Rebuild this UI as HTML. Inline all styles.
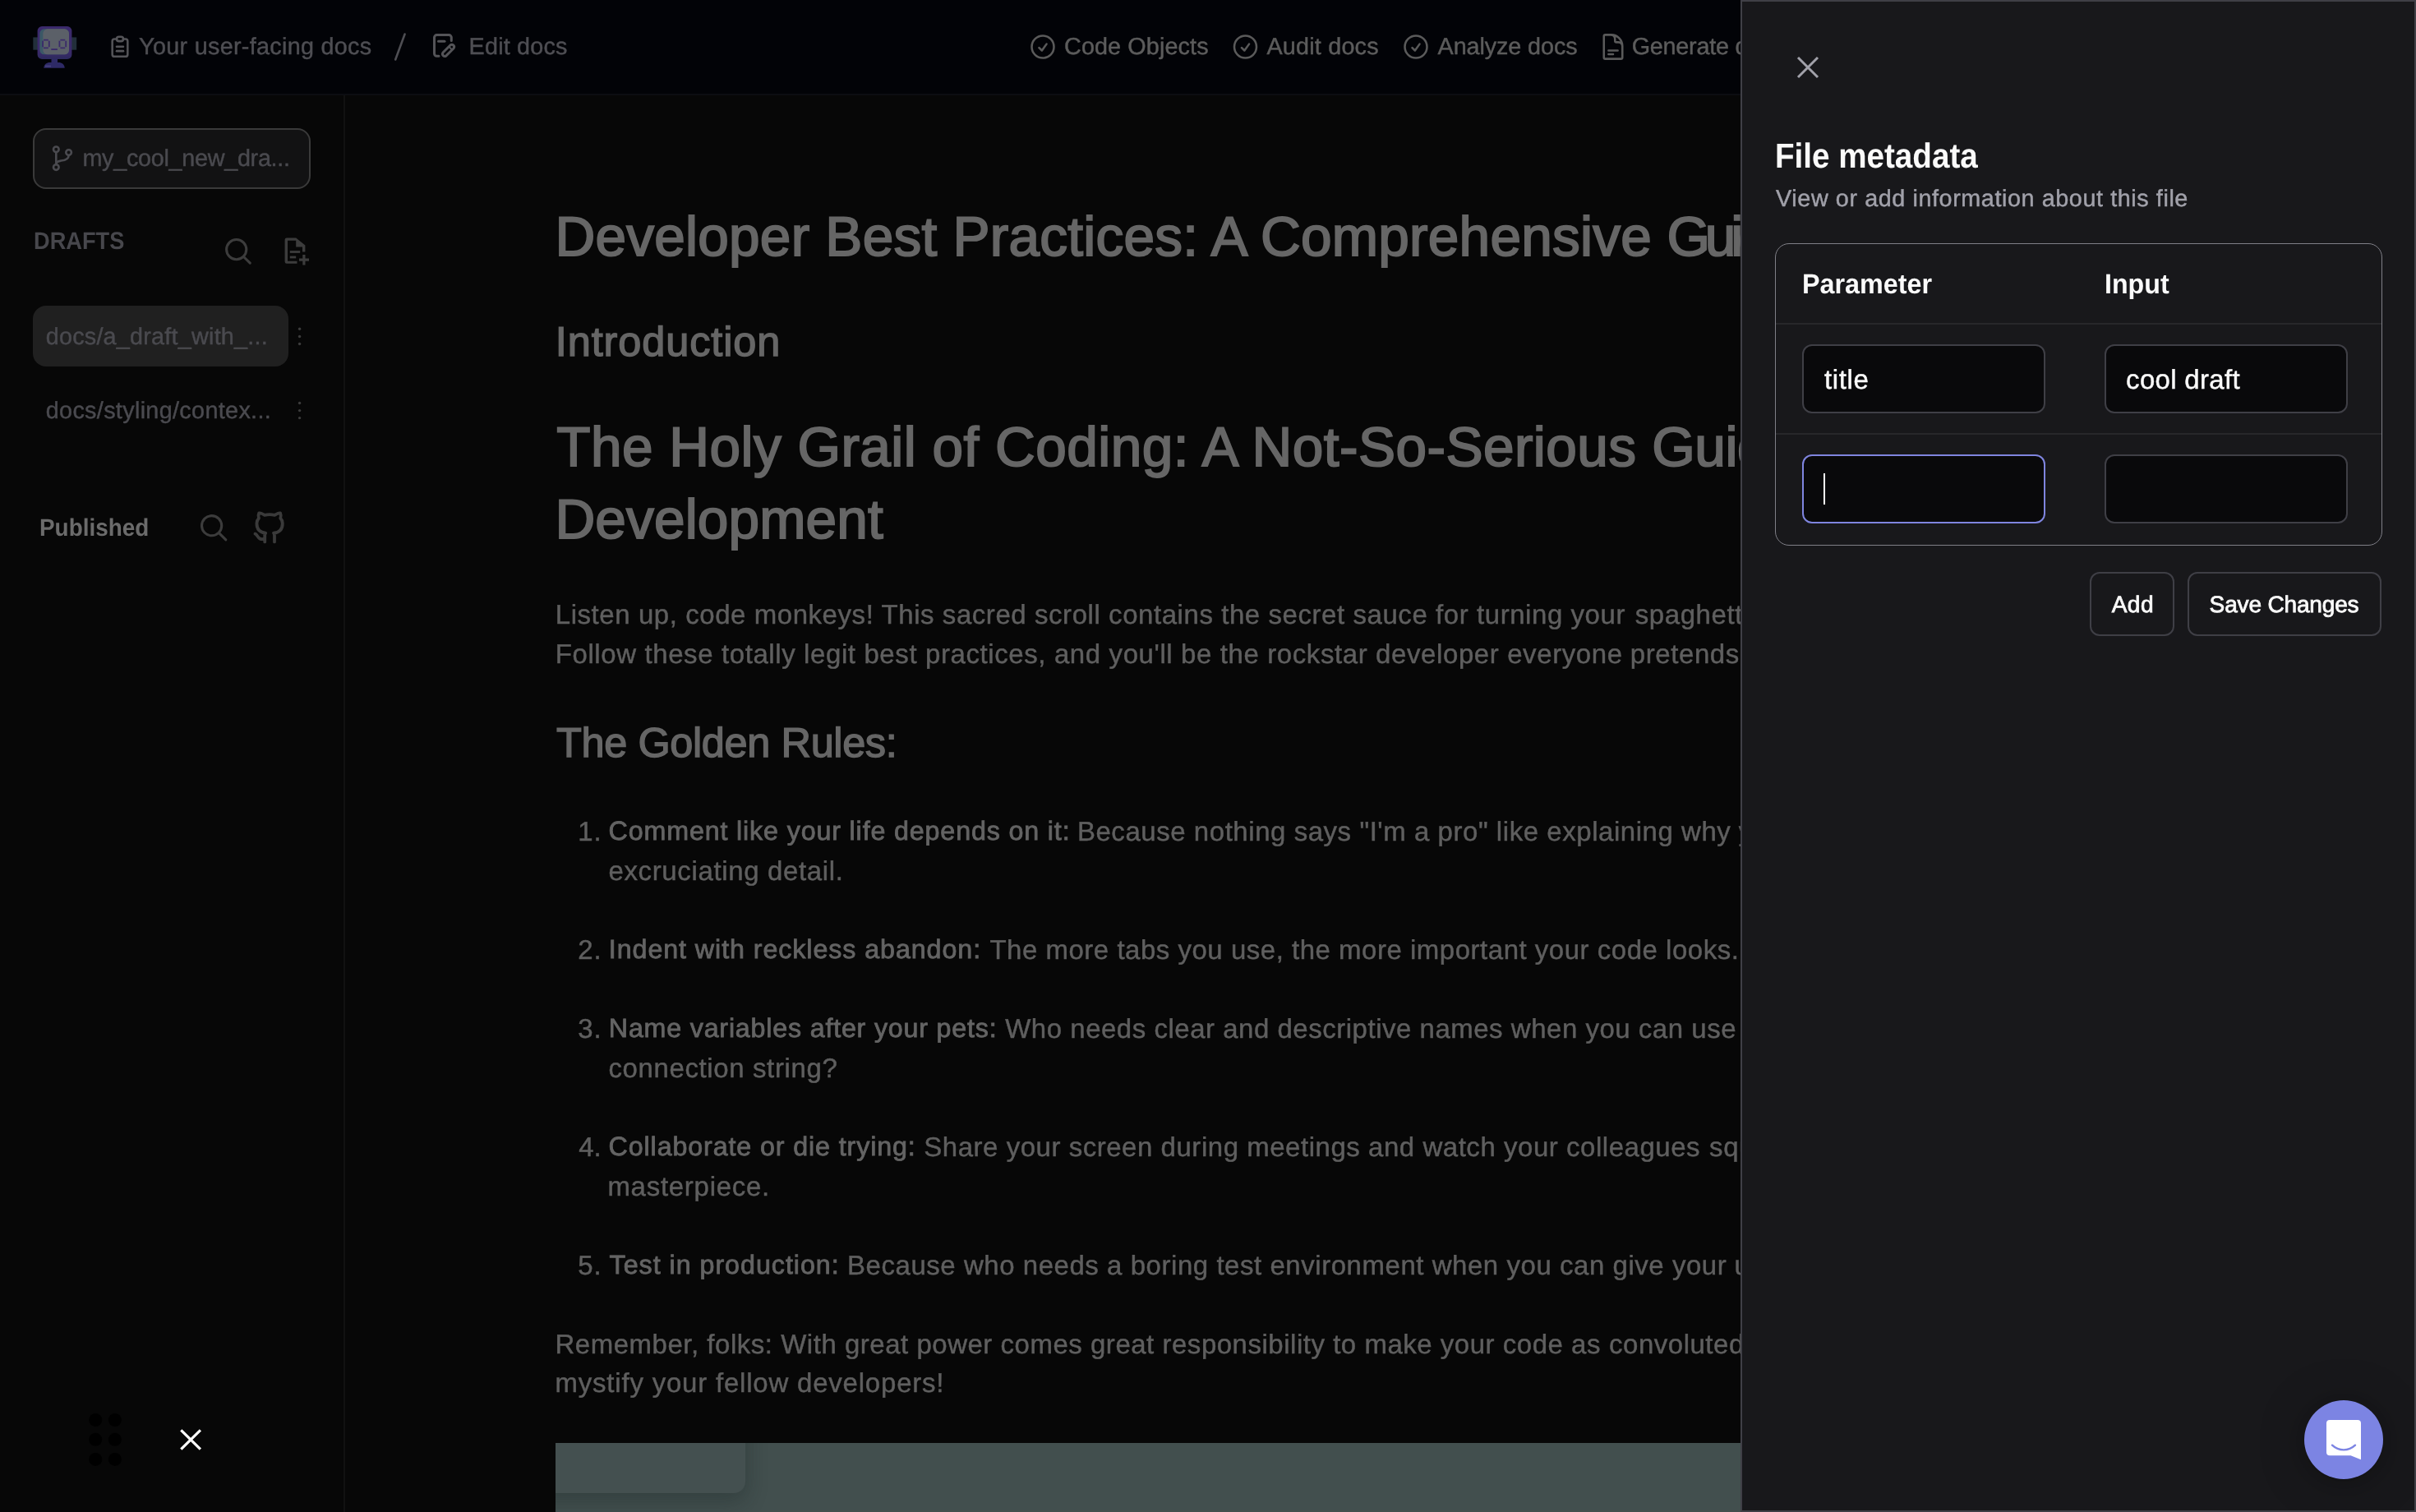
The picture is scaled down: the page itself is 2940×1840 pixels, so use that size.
<!DOCTYPE html>
<html lang="en">
<head>
<meta charset="utf-8">
<title>Edit docs</title>
<style>
html,body{margin:0;padding:0}
body{width:2940px;height:1840px;overflow:hidden;background:#070707;position:relative;font-family:"Liberation Sans",sans-serif}
.a{position:absolute;box-sizing:border-box}
.tl{will-change:transform;text-rendering:geometricPrecision}
.t{position:absolute;white-space:pre;font-family:"Liberation Sans",sans-serif}
#app{left:0;top:0;width:2118px;height:1840px;overflow:hidden}
#hdr{left:0;top:0;width:2940px;height:116px;background:#020307;border-bottom:2px solid #0c0d12}
#sbline{left:418px;top:116px;width:2px;height:1724px;background:#111111}
#branch{left:40px;top:156px;width:338px;height:74px;border:2px solid #3a3a3a;border-radius:16px;background:#121213}
#sel{left:40px;top:372px;width:311px;height:74px;border-radius:16px;background:#202020}
#img{left:676px;top:1756px;width:1500px;height:90px;background:#424f4e;overflow:hidden}
#imgcard{left:-50px;top:-50px;width:281px;height:111px;border-radius:14px;background:#445050;box-shadow:1px 10px 26px rgba(20,32,32,.32)}
#panel{left:2118px;top:0;width:822px;height:1840px;background:#18181b;border:2px solid #3f3f46}
#tbl{left:2160px;top:296px;width:739px;height:368px;border:1px solid #7f7f87;border-radius:17px}
.sep{left:2161px;width:737px;height:2px;background:#27272a}
.inp{width:296px;height:84px;border:2px solid #3f3f46;border-radius:12px;background:#09090b}
.btn{height:78px;border:2px solid #3f3f46;border-radius:12px;top:696px}
</style>
</head>
<body>
<div id="app" class="a">
  <div id="hdr" class="a"></div>
  <div id="sbline" class="a"></div>
  <div id="branch" class="a"></div>
  <div id="sel" class="a"></div>
  <div id="img" class="a"><div id="imgcard" class="a"></div></div>
<svg class="a" style="left:0;top:0" width="2118" height="1840" viewBox="0 0 2118 1840" fill="none">
<!-- logo -->
<g>
  <rect x="40.3" y="45.4" width="6" height="15.3" fill="#222f3a"/>
  <rect x="87" y="45.4" width="6.2" height="15.3" fill="#222f3a"/>
  <defs><linearGradient id="lg" x1="0" y1="0" x2="0" y2="1"><stop offset="0" stop-color="#3b2a6c"/><stop offset=".8" stop-color="#3a2a6a"/><stop offset="1" stop-color="#2c2a5c"/></linearGradient></defs>
  <rect x="45.6" y="32.1" width="41.8" height="39.8" rx="5.5" fill="url(#lg)"/>
  <rect x="48.3" y="35.3" width="35.7" height="31" rx="5.5" fill="#3b5866"/>
  <rect x="52.3" y="35.3" width="31.7" height="31" rx="5.5" fill="#5b6068"/>
  <g fill="#3a2a6a">
    <rect x="53" y="47.8" width="5.8" height="1.7"/><rect x="53" y="57.5" width="5.8" height="1.7"/>
    <rect x="51.2" y="49.7" width="1.8" height="7.5"/><rect x="58.9" y="49.7" width="1.8" height="7.5"/>
    <rect x="73.4" y="47.8" width="5.8" height="1.7"/><rect x="73.4" y="57.5" width="5.8" height="1.7"/>
    <rect x="71.5" y="49.7" width="1.8" height="7.5"/><rect x="79.3" y="49.7" width="1.8" height="7.5"/>
    <rect x="62.3" y="59.2" width="7.6" height="1.8"/>
  </g>
  <rect x="62.5" y="71.5" width="7.5" height="5" fill="#2e2a66"/>
  <path d="M53.3 82.7c0-4 3.5-6.6 7.5-6.6h10.4c4 0 7.5 2.600 7.500 6.600z" fill="#2e2a66"/>
  <rect x="55" y="79.6" width="7" height="1.8" fill="#46427f"/>
</g>
<!-- clipboard-text (tabler) -->
<g transform="translate(130 40.8) scale(1.3333)" stroke="#545458" stroke-width="1.9" stroke-linecap="round" stroke-linejoin="round">
  <path d="M9 5h-2a2 2 0 0 0 -2 2v12a2 2 0 0 0 2 2h10a2 2 0 0 0 2 -2v-12a2 2 0 0 0 -2 -2h-2"/>
  <path d="M9 5a2 2 0 0 1 2 -2h2a2 2 0 0 1 2 2a2 2 0 0 1 -2 2h-2a2 2 0 0 1 -2 -2z"/>
  <path d="M9 12h6"/><path d="M9 16h6"/>
</g>
<!-- slash -->
<path d="M492.600 41.500L481.200 72.500" stroke="#4e4e53" stroke-width="2.6" stroke-linecap="round"/>
<!-- edit icon -->
<g stroke="#545458" stroke-width="3" stroke-linecap="round" stroke-linejoin="round">
  <path d="M549.300 49.600V45.600a3 3 0 0 0 -3 -3H531.500a3 3 0 0 0 -3 3V65.300a3 3 0 0 0 3 3H534"/>
  <path d="M533.500 50.300H541"/>
  <path d="M548.200 54.800l-9.200 9.200a2.800 2.800 0 0 0 3.900 3.900l9.200 -9.200a2.800 2.800 0 0 0 -3.900 -3.900z"/>
  <path d="M546.300 56.700l3.900 3.900" stroke-width="2"/>
</g>
<!-- check circles (heroicons) -->
<g stroke="#5a5a5a" stroke-width="1.7" stroke-linecap="round" stroke-linejoin="round">
  <path transform="translate(1251 39) scale(1.5)" d="M9 12.750 11.250 15 15 9.750M21 12a9 9 0 1 1-18 0 9 9 0 0 1 18 0Z"/>
  <path transform="translate(1497.500 39) scale(1.5)" d="M9 12.750 11.250 15 15 9.750M21 12a9 9 0 1 1-18 0 9 9 0 0 1 18 0Z"/>
  <path transform="translate(1705 39) scale(1.5)" d="M9 12.750 11.250 15 15 9.750M21 12a9 9 0 1 1-18 0 9 9 0 0 1 18 0Z"/>
  <path transform="translate(1945 39) scale(1.5)" d="M19.500 14.250v-2.625a3.375 3.375 0 0 0-3.375-3.375h-1.500A1.125 1.125 0 0 1 13.500 7.125v-1.500a3.375 3.375 0 0 0-3.375-3.375H8.250m0 12.750h7.500m-7.500 3H12M10.500 2.250H5.625c-.621 0-1.125.504-1.125 1.125v17.250c0 .621.504 1.125 1.125 1.125h12.750c.621 0 1.125-.504 1.125-1.125V11.250a9 9 0 0 0-9-9Z"/>
</g>
<!-- git branch -->
<g stroke="#4a4a4f" stroke-width="2.600" stroke-linecap="round" stroke-linejoin="round">
  <circle cx="68.300" cy="181.800" r="3.300"/><circle cx="68.300" cy="203.600" r="3.300"/><circle cx="83.600" cy="185.600" r="3.300"/>
  <path d="M68.300 185.400V200"/>
  <path d="M83.600 189.200c0 5.500 -6 6 -9.500 6.400c-3.500 0.400 -5.800 1.800 -5.800 4.400"/>
</g>
<!-- search (drafts) -->
<g stroke="#3c3c3c" stroke-width="3.100" stroke-linecap="round">
  <circle cx="287.700" cy="303.600" r="12.100"/><path d="M296.500 312.500L304.300 320.100"/>
</g>
<!-- file add -->
<g fill="#3c3c3c">
  <path d="M349 289.400h11.200l11.200 9.200v8h-3.400v-6.200h-7.800v-7.600H350v25H361.500v3H349a2.400 2.400 0 0 1 -2.400 -2.400v-26.600a2.400 2.400 0 0 1 2.400 -2.400z"/>
  <rect x="352.800" y="305.100" width="12.400" height="2.800"/>
  <rect x="352.800" y="311.600" width="7.400" height="2.800"/>
  <rect x="364" y="314.500" width="12" height="3.200"/>
  <rect x="368.300" y="310" width="3.200" height="12.500"/>
</g>
<!-- kebabs -->
<g fill="#3c3c3c">
  <circle cx="364.600" cy="400.300" r="1.700"/><circle cx="364.600" cy="409.500" r="1.700"/><circle cx="364.600" cy="418.500" r="1.700"/>
  <circle cx="364.600" cy="490.500" r="1.700"/><circle cx="364.600" cy="499.600" r="1.700"/><circle cx="364.600" cy="508.600" r="1.700"/>
</g>
<!-- search (published) -->
<g stroke="#3c3c3c" stroke-width="3.100" stroke-linecap="round">
  <circle cx="257.600" cy="639.700" r="12.100"/><path d="M266.500 648.600L274.800 656.800"/>
</g>
<!-- github (tabler) -->
<g transform="translate(304.600 618.300) scale(1.960)" stroke="#3a3a3a" stroke-width="1.950" stroke-linecap="round" stroke-linejoin="round">
  <path d="M9 19c-4.300 1.400 -4.300 -2.500 -6 -3m12 5v-3.500c0 -1 .1 -1.400 -.5 -2c2.800 -.3 5.500 -1.400 5.500 -6a4.600 4.600 0 0 0 -1.300 -3.200a4.200 4.200 0 0 0 -.1 -3.200s-1.100 -.3 -3.500 1.300a12.300 12.300 0 0 0 -6.200 0c-2.400 -1.600 -3.500 -1.300 -3.500 -1.300a4.200 4.200 0 0 0 -.1 3.200a4.600 4.600 0 0 0 -1.300 3.200c0 4.600 2.700 5.700 5.500 6c-.6 .6 -.6 1.200 -.5 2v3.500"/>
</g>
<!-- bottom drag dots + close -->
<g fill="#000000">
  <circle cx="116.200" cy="1728" r="8"/><circle cx="139.900" cy="1728" r="8"/>
  <circle cx="116.200" cy="1751.800" r="8"/><circle cx="139.900" cy="1751.800" r="8"/>
  <circle cx="116.200" cy="1775.900" r="8"/><circle cx="139.900" cy="1775.900" r="8"/>
</g>
<path d="M220.300 1740.400L243.900 1763.600M243.900 1740.400L220.300 1763.600" stroke="#ffffff" stroke-width="3.200" stroke-linecap="butt"/>
</svg>

<div class="a tl" style="left:0;top:0;width:2118px;height:1840px">
<span class="t" style="left:169.12px;top:43px;font-size:28.75px;line-height:28.75px;color:#4e4e53;letter-spacing:0.301px;-webkit-text-stroke:0.45px #4e4e53">Your user-facing docs</span>
<span class="t" style="left:570.62px;top:43px;font-size:28.75px;line-height:28.75px;color:#4e4e53;letter-spacing:0.196px;-webkit-text-stroke:0.45px #4e4e53">Edit docs</span>
<span class="t" style="left:1295.02px;top:43px;font-size:28.75px;line-height:28.75px;color:#5c5c5c;letter-spacing:0.122px;-webkit-text-stroke:0.45px #5c5c5c">Code Objects</span>
<span class="t" style="left:1541.42px;top:43px;font-size:28.75px;line-height:28.75px;color:#5c5c5c;letter-spacing:0.209px;-webkit-text-stroke:0.45px #5c5c5c">Audit docs</span>
<span class="t" style="left:1749.62px;top:43px;font-size:28.75px;line-height:28.75px;color:#5c5c5c;letter-spacing:-0.098px;-webkit-text-stroke:0.45px #5c5c5c">Analyze docs</span>
<span class="t" style="left:1985.72px;top:43px;font-size:28.75px;line-height:28.75px;color:#5c5c5c;letter-spacing:-0.233px;-webkit-text-stroke:0.45px #5c5c5c">Generate</span>
<span class="t" style="left:2111.53px;top:43px;font-size:28.75px;line-height:28.75px;color:#5c5c5c;letter-spacing:-0.233px;-webkit-text-stroke:0.45px #5c5c5c">docs</span>
<span class="t" style="left:100.42px;top:179px;font-size:28.75px;line-height:28.75px;color:#4a4a4f;letter-spacing:-0.274px;-webkit-text-stroke:0.45px #4a4a4f">my_cool_new_dra...</span>
<span class="t" style="left:40.58px;top:279px;font-size:29.61px;line-height:29.61px;color:#47474c;transform:scaleX(0.9187);transform-origin:0 0;font-weight:700">DRAFTS</span>
<span class="t" style="left:55.73px;top:396px;font-size:28.75px;line-height:28.75px;color:#4a4a4f;letter-spacing:0.237px;-webkit-text-stroke:0.45px #4a4a4f">docs/a_draft_with_...</span>
<span class="t" style="left:55.73px;top:486px;font-size:28.75px;line-height:28.75px;color:#4a4a4f;letter-spacing:0.342px;-webkit-text-stroke:0.45px #4a4a4f">docs/styling/contex...</span>
<span class="t" style="left:48.06px;top:628px;font-size:29.61px;line-height:29.61px;color:#6b6b6b;transform:scaleX(0.9426);transform-origin:0 0;font-weight:700">Published</span>
<span class="t" style="left:675.45px;top:255px;font-size:67.55px;line-height:67.55px;color:#666666;letter-spacing:0.226px;-webkit-text-stroke:1.9px #666666">Developer Best Practices: A Comprehensive</span>
<span class="t" style="left:2028.45px;top:255px;font-size:67.55px;line-height:67.55px;color:#666666;letter-spacing:-6.140px;-webkit-text-stroke:1.9px #666666">Guide</span>
<span class="t" style="left:675.80px;top:391px;font-size:50.53px;line-height:50.53px;color:#666666;letter-spacing:0.866px;-webkit-text-stroke:1.4px #666666">Introduction</span>
<span class="t" style="left:677.25px;top:511px;font-size:67.55px;line-height:67.55px;color:#666666;letter-spacing:0.455px;-webkit-text-stroke:1.9px #666666">The Holy Grail of Coding: A Not-So-Serious</span>
<span class="t" style="left:2010.25px;top:511px;font-size:67.55px;line-height:67.55px;color:#666666;letter-spacing:-0.453px;-webkit-text-stroke:1.9px #666666">Guide to</span>
<span class="t" style="left:675.45px;top:599px;font-size:67.55px;line-height:67.55px;color:#666666;letter-spacing:0.127px;-webkit-text-stroke:1.9px #666666">Development</span>
<span class="t" style="left:675.73px;top:731px;font-size:32.98px;line-height:32.98px;color:#5f5f5f;letter-spacing:0.575px;-webkit-text-stroke:0.45px #5f5f5f">Listen up, code monkeys! This sacred scroll contains the secret sauce for turning your</span>
<span class="t" style="left:1989.82px;top:731px;font-size:32.98px;line-height:32.98px;color:#5f5f5f;letter-spacing:0.575px;-webkit-text-stroke:0.45px #5f5f5f">spaghetti code</span>
<span class="t" style="left:675.73px;top:779px;font-size:32.98px;line-height:32.98px;color:#5f5f5f;letter-spacing:0.612px;-webkit-text-stroke:0.45px #5f5f5f">Follow these totally legit best practices, and you&#x27;ll be the rockstar developer everyone</span>
<span class="t" style="left:1983.72px;top:779px;font-size:32.98px;line-height:32.98px;color:#5f5f5f;letter-spacing:0.605px;-webkit-text-stroke:0.45px #5f5f5f">pretends to be.</span>
<span class="t" style="left:677.00px;top:879px;font-size:50.53px;line-height:50.53px;color:#666666;letter-spacing:-0.404px;-webkit-text-stroke:1.4px #666666">The Golden Rules:</span>
<span class="t" style="left:703.23px;top:995px;font-size:32.98px;line-height:32.98px;color:#5f5f5f;letter-spacing:1.014px;-webkit-text-stroke:0.45px #5f5f5f">1.</span>
<span class="t" style="left:703.23px;top:1139px;font-size:32.98px;line-height:32.98px;color:#5f5f5f;letter-spacing:1.014px;-webkit-text-stroke:0.45px #5f5f5f">2.</span>
<span class="t" style="left:703.23px;top:1235px;font-size:32.98px;line-height:32.98px;color:#5f5f5f;letter-spacing:1.014px;-webkit-text-stroke:0.45px #5f5f5f">3.</span>
<span class="t" style="left:704.23px;top:1379px;font-size:32.98px;line-height:32.98px;color:#5f5f5f;letter-spacing:0.014px;-webkit-text-stroke:0.45px #5f5f5f">4.</span>
<span class="t" style="left:703.23px;top:1523px;font-size:32.98px;line-height:32.98px;color:#5f5f5f;letter-spacing:1.014px;-webkit-text-stroke:0.45px #5f5f5f">5.</span>
<span class="t" style="left:740.62px;top:995px;font-size:32.22px;line-height:32.22px;color:#646464;letter-spacing:0.859px;-webkit-text-stroke:0.85px #646464">Comment like your life depends on it:</span>
<span class="t" style="left:1310.92px;top:995px;font-size:32.98px;line-height:32.98px;color:#5f5f5f;letter-spacing:0.559px;-webkit-text-stroke:0.45px #5f5f5f">Because nothing says &quot;I&#x27;m a pro&quot; like explaining why</span>
<span class="t" style="left:2115.82px;top:995px;font-size:32.98px;line-height:32.98px;color:#5f5f5f;letter-spacing:0.559px;-webkit-text-stroke:0.45px #5f5f5f">your</span>
<span class="t" style="left:740.43px;top:1043px;font-size:32.98px;line-height:32.98px;color:#5f5f5f;letter-spacing:0.656px;-webkit-text-stroke:0.45px #5f5f5f">excruciating detail.</span>
<span class="t" style="left:740.82px;top:1139px;font-size:32.22px;line-height:32.22px;color:#646464;letter-spacing:0.930px;-webkit-text-stroke:0.85px #646464">Indent with reckless abandon:</span>
<span class="t" style="left:1204.42px;top:1139px;font-size:32.98px;line-height:32.98px;color:#5f5f5f;letter-spacing:0.526px;-webkit-text-stroke:0.45px #5f5f5f">The more tabs you use, the more important your code looks.</span>
<span class="t" style="left:740.82px;top:1235px;font-size:32.22px;line-height:32.22px;color:#646464;letter-spacing:0.804px;-webkit-text-stroke:0.85px #646464">Name variables after your pets:</span>
<span class="t" style="left:1223.22px;top:1235px;font-size:32.98px;line-height:32.98px;color:#5f5f5f;letter-spacing:0.527px;-webkit-text-stroke:0.45px #5f5f5f">Who needs clear and descriptive names when you can use</span>
<span class="t" style="left:740.43px;top:1283px;font-size:32.98px;line-height:32.98px;color:#5f5f5f;letter-spacing:0.630px;-webkit-text-stroke:0.45px #5f5f5f">connection string?</span>
<span class="t" style="left:740.62px;top:1379px;font-size:32.22px;line-height:32.22px;color:#646464;letter-spacing:0.888px;-webkit-text-stroke:0.85px #646464">Collaborate or die trying:</span>
<span class="t" style="left:1124.22px;top:1379px;font-size:32.98px;line-height:32.98px;color:#5f5f5f;letter-spacing:0.546px;-webkit-text-stroke:0.45px #5f5f5f">Share your screen during meetings and watch your colleagues</span>
<span class="t" style="left:2080.12px;top:1379px;font-size:32.98px;line-height:32.98px;color:#5f5f5f;letter-spacing:0.546px;-webkit-text-stroke:0.45px #5f5f5f">squirm</span>
<span class="t" style="left:739.43px;top:1427px;font-size:32.98px;line-height:32.98px;color:#5f5f5f;letter-spacing:0.734px;-webkit-text-stroke:0.45px #5f5f5f">masterpiece.</span>
<span class="t" style="left:741.62px;top:1523px;font-size:32.22px;line-height:32.22px;color:#646464;letter-spacing:0.979px;-webkit-text-stroke:0.85px #646464">Test in production:</span>
<span class="t" style="left:1031.02px;top:1523px;font-size:32.98px;line-height:32.98px;color:#5f5f5f;letter-spacing:0.555px;-webkit-text-stroke:0.45px #5f5f5f">Because who needs a boring test environment when you can give your</span>
<span class="t" style="left:2110.53px;top:1523px;font-size:32.98px;line-height:32.98px;color:#5f5f5f;letter-spacing:0.555px;-webkit-text-stroke:0.45px #5f5f5f">users</span>
<span class="t" style="left:675.52px;top:1619px;font-size:32.98px;line-height:32.98px;color:#5f5f5f;letter-spacing:0.530px;-webkit-text-stroke:0.45px #5f5f5f">Remember, folks: With great power comes great responsibility to make your code as</span>
<span class="t" style="left:1958.02px;top:1619px;font-size:32.98px;line-height:32.98px;color:#5f5f5f;letter-spacing:0.530px;-webkit-text-stroke:0.45px #5f5f5f">convoluted as</span>
<span class="t" style="left:675.52px;top:1666px;font-size:32.98px;line-height:32.98px;color:#5f5f5f;letter-spacing:0.803px;-webkit-text-stroke:0.45px #5f5f5f">mystify your fellow developers!</span>
</div>
</div>
<div id="panel" class="a"></div>
<div id="tbl" class="a"></div>
<div class="a sep" style="top:393px"></div>
<div class="a sep" style="top:527px"></div>
<div class="a inp" style="left:2193px;top:419px"></div>
<div class="a inp" style="left:2561px;top:419px"></div>
<div class="a inp" style="left:2193px;top:553px;border-color:#7f85df"></div>
<div class="a inp" style="left:2561px;top:553px"></div>
<div class="a" style="left:2219px;top:576px;width:2px;height:38px;background:#ffffff"></div>
<div class="a btn" style="left:2543px;width:103px"></div>
<div class="a btn" style="left:2662px;width:236px"></div>
<div class="a" style="left:2804px;top:1704px;width:96px;height:96px;border-radius:50%;background:#7c84e3;box-shadow:0 2px 12px rgba(0,0,0,.12),0 4px 60px rgba(0,0,0,.22)"></div>
<svg class="a" style="left:2118px;top:0" width="822" height="1840" viewBox="2118 0 822 1840" fill="none">
<path d="M2188 70L2212 94M2212 70L2188 94" stroke="#a1a1aa" stroke-width="3" stroke-linecap="butt"/>
<path d="M2835 1728h34a4 4 0 0 1 4 4v44.300l-12.500 -5H2835a4 4 0 0 1 -4 -4v-35.300a4 4 0 0 1 4 -4z" fill="#ffffff"/>
<path d="M2838 1758.700c8 7.600 20 7.600 28 0" stroke="#7c84e3" stroke-width="2.400" stroke-linecap="round"/>
</svg>

<div class="a tl" style="left:0;top:0;width:2940px;height:1840px">
<span class="t" style="left:2160.17px;top:169px;font-size:42.3px;line-height:42.3px;color:#fafafa;transform:scaleX(0.9126);transform-origin:0 0;font-weight:700">File metadata</span>
<span class="t" style="left:2161.12px;top:228px;font-size:28.75px;line-height:28.75px;color:#a1a1aa;letter-spacing:0.588px;-webkit-text-stroke:0.45px #a1a1aa">View or add information about this file</span>
<span class="t" style="left:2192.59px;top:330px;font-size:33.84px;line-height:33.84px;color:#fafafa;transform:scaleX(0.9551);transform-origin:0 0;font-weight:700">Parameter</span>
<span class="t" style="left:2560.70px;top:330px;font-size:33.84px;line-height:33.84px;color:#fafafa;transform:scaleX(0.9516);transform-origin:0 0;font-weight:700">Input</span>
<span class="t" style="left:2220.03px;top:445px;font-size:32.98px;line-height:32.98px;color:#fafafa;letter-spacing:0.620px;-webkit-text-stroke:0.45px #fafafa">title</span>
<span class="t" style="left:2587.12px;top:445px;font-size:32.98px;line-height:32.98px;color:#fafafa;letter-spacing:0.322px;-webkit-text-stroke:0.45px #fafafa">cool draft</span>
<span class="t" style="left:2569.70px;top:722px;font-size:28.09px;line-height:28.09px;color:#fafafa;letter-spacing:0.428px;-webkit-text-stroke:0.8px #fafafa">Add</span>
<span class="t" style="left:2688.60px;top:722px;font-size:28.09px;line-height:28.09px;color:#fafafa;letter-spacing:-0.196px;-webkit-text-stroke:0.8px #fafafa">Save Changes</span>
</div>
</body>
</html>
